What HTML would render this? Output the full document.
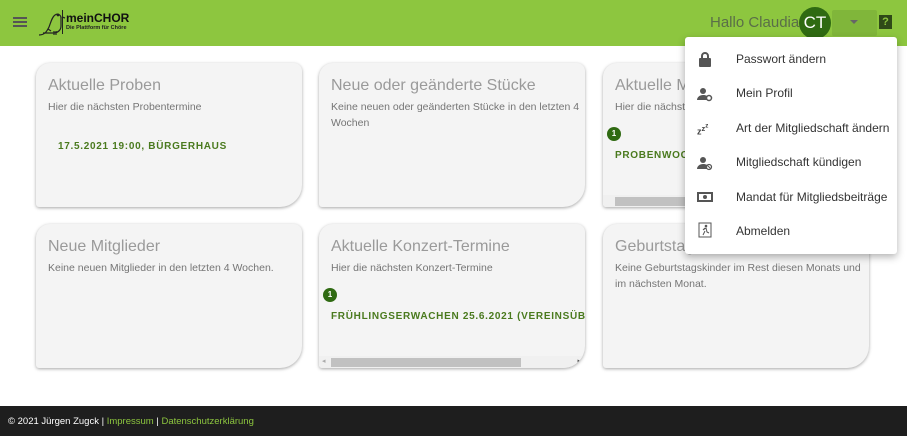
<!DOCTYPE html>
<html><head><meta charset="utf-8"><style>
*{box-sizing:border-box;margin:0;padding:0}
body{width:907px;height:436px;position:relative;overflow:hidden;background:#fff;font-family:"Liberation Sans",sans-serif}
.hdr{position:absolute;left:0;top:0;width:907px;height:46px;background:#8dc63f}
.card{position:absolute;width:266px;height:144px;background:#f4f4f4;border-radius:14px 8px 22px 3px;box-shadow:0 1px 3px rgba(0,0,0,.35);overflow:hidden}
.card h2{position:absolute;left:12px;top:14px;font-size:16px;font-weight:normal;color:#9a9a9a}
.card p{position:absolute;left:12px;top:36px;width:250px;font-size:10.5px;line-height:16px;color:#757575}
.g{position:absolute;font-size:10px;font-weight:bold;letter-spacing:.7px;color:#4a7a1e;white-space:nowrap}
.badge{position:absolute;width:14px;height:14px;border-radius:50%;background:#2f6a12;color:#fff;font-size:8px;font-weight:bold;text-align:center;line-height:14px}
.sb{position:absolute;left:0;bottom:0;width:100%;height:12px;background:#f0f0f0}
.sb i{position:absolute;top:2px;height:9px;background:#c1c1c1}
.menu{position:absolute;left:685px;top:37px;width:212px;height:217px;background:#fff;border-radius:3px;box-shadow:0 3px 8px rgba(0,0,0,.3)}
.mi{position:absolute;left:51px;font-size:12px;color:#333}
.ic{position:absolute;left:12px;width:16px;height:16px}
.ft{position:absolute;left:0;top:406px;width:907px;height:30px;background:#1e1e1e;color:#fff;font-size:9.5px;padding:10px 0 0 8px}
.ft span{color:#8dc63f}
</style></head><body>
<div class="hdr">
 <div style="position:absolute;left:13px;top:17px;width:14px;height:2px;background:#555;box-shadow:0 4px 0 #555,0 8px 0 #555"></div>
 <svg style="position:absolute;left:36px;top:9px" width="30" height="28" viewBox="0 0 30 28" fill="none" stroke="#222" stroke-width="1.2"><path d="M3 26c6 0 8-4 10-8 2-5 3-10 6-12 3-2 6 0 6 3v8c0 4-3 7-8 7H7"/><path d="M12 20l3 2M18 22v4M20 22v4"/><circle cx="22" cy="6" r=".8" fill="#222"/><path d="M26 8l3 1"/></svg>
 <div style="position:absolute;left:62px;top:10px;width:1px;height:24px;background:#222"></div>
 <div style="position:absolute;left:66px;top:11px;font-size:12px;font-weight:bold;color:#111">meinCHOR</div>
 <div style="position:absolute;left:66px;top:25px;font-size:5.5px;font-weight:bold;color:#222">Die Plattform für Chöre</div>
 <div style="position:absolute;left:710px;top:14px;font-size:15px;color:#5a6e48">Hallo Claudia</div>
 <div style="position:absolute;left:799px;top:7px;width:32px;height:32px;border-radius:50%;background:#2f6a12;color:#fff;font-size:17px;text-align:center;line-height:32px">CT</div>
 <div style="position:absolute;left:832px;top:10px;width:45px;height:26px;background:#80b63a;border-radius:2px"></div>
 <div style="position:absolute;left:850px;top:20px;border:4px solid transparent;border-top:4px solid #666;border-bottom:0"></div>
 <div style="position:absolute;left:879px;top:15px;width:13px;height:14px;background:#2f4a18;color:#8dc63f;font-size:11px;font-weight:bold;text-align:center;line-height:14px">?</div>
</div>

<div class="card" style="left:36px;top:63px"><h2>Aktuelle Proben</h2><p>Hier die nächsten Probentermine</p><div class="g" style="left:22px;top:78px">17.5.2021 19:00, BÜRGERHAUS</div></div>
<div class="card" style="left:319px;top:63px"><h2>Neue oder geänderte Stücke</h2><p>Keine neuen oder geänderten Stücke in den letzten 4 Wochen</p></div>
<div class="card" style="left:603px;top:63px"><h2>Aktuelle Mitgliederversammlungen</h2><p>Hier die nächsten Termine</p><div class="badge" style="left:4px;top:64px">1</div><div class="g" style="left:12px;top:87px">PROBENWOCHENENDE</div><div class="sb"><i style="left:12px;width:200px"></i></div></div>
<div class="card" style="left:36px;top:224px"><h2>Neue Mitglieder</h2><p>Keine neuen Mitglieder in den letzten 4 Wochen.</p></div>
<div class="card" style="left:319px;top:224px"><h2>Aktuelle Konzert-Termine</h2><p>Hier die nächsten Konzert-Termine</p><div class="badge" style="left:4px;top:64px">1</div><div class="g" style="left:12px;top:87px">FRÜHLINGSERWACHEN 25.6.2021 (VEREINSÜBERGREIFEND)</div><div class="sb"><i style="left:12px;width:190px"></i><span style="position:absolute;left:3px;top:1px;font-size:7px;color:#aaa">◂</span><span style="position:absolute;right:4px;top:1px;font-size:7px;color:#555">▸</span></div></div>
<div class="card" style="left:603px;top:224px"><h2>Geburtstagskinder</h2><p>Keine Geburtstagskinder im Rest diesen Monats und im nächsten Monat.</p></div>

<div class="menu">
 <svg class="ic" style="top:14px" viewBox="0 0 16 16"><rect x="2" y="7" width="12" height="9" rx="1" fill="#555"/><path d="M5 7V5a3 3 0 016 0v2" stroke="#555" stroke-width="2" fill="none"/></svg>
 <div class="mi" style="top:15px">Passwort ändern</div>
 <svg class="ic" style="top:49px" viewBox="0 0 16 16"><circle cx="6" cy="5" r="3" fill="#555"/><path d="M0 14c0-3 3-5 6-5s4 1 4 1v4z" fill="#555"/><circle cx="12" cy="12" r="2.5" fill="none" stroke="#555" stroke-width="1.5"/></svg>
 <div class="mi" style="top:49px">Mein Profil</div>
 <div style="position:absolute;left:12px;top:85px;font-size:9px;color:#444;font-weight:bold">z<sup>z<sup>z</sup></sup></div>
 <div class="mi" style="top:84px">Art der Mitgliedschaft ändern</div>
 <svg class="ic" style="top:118px" viewBox="0 0 16 16"><circle cx="6" cy="5" r="3" fill="#555"/><path d="M0 14c0-3 3-5 6-5s4 1 4 1v4z" fill="#555"/><circle cx="12" cy="12" r="2.5" fill="none" stroke="#555" stroke-width="1.2"/><path d="M10.5 10.5l3 3" stroke="#555"/></svg>
 <div class="mi" style="top:118px">Mitgliedschaft kündigen</div>
 <svg class="ic" style="top:152px" viewBox="0 0 16 16"><rect x="1" y="4" width="14" height="8" fill="none" stroke="#555" stroke-width="2"/><circle cx="8" cy="8" r="2" fill="#555"/></svg>
 <div class="mi" style="top:153px">Mandat für Mitgliedsbeiträge</div>
 <svg class="ic" style="top:185px" viewBox="0 0 16 16"><rect x="2" y="1" width="12" height="14" fill="none" stroke="#555"/><circle cx="9" cy="4" r="1.3" fill="#555"/><path d="M6 8l3-2 1 4 2 1M8 9l-2 4M8 6l-2 2" stroke="#555" fill="none"/></svg>
 <div class="mi" style="top:187px">Abmelden</div>
</div>

<div class="ft">© 2021 Jürgen Zugck | <span>Impressum</span> | <span>Datenschutzerklärung</span></div>
</body></html>
